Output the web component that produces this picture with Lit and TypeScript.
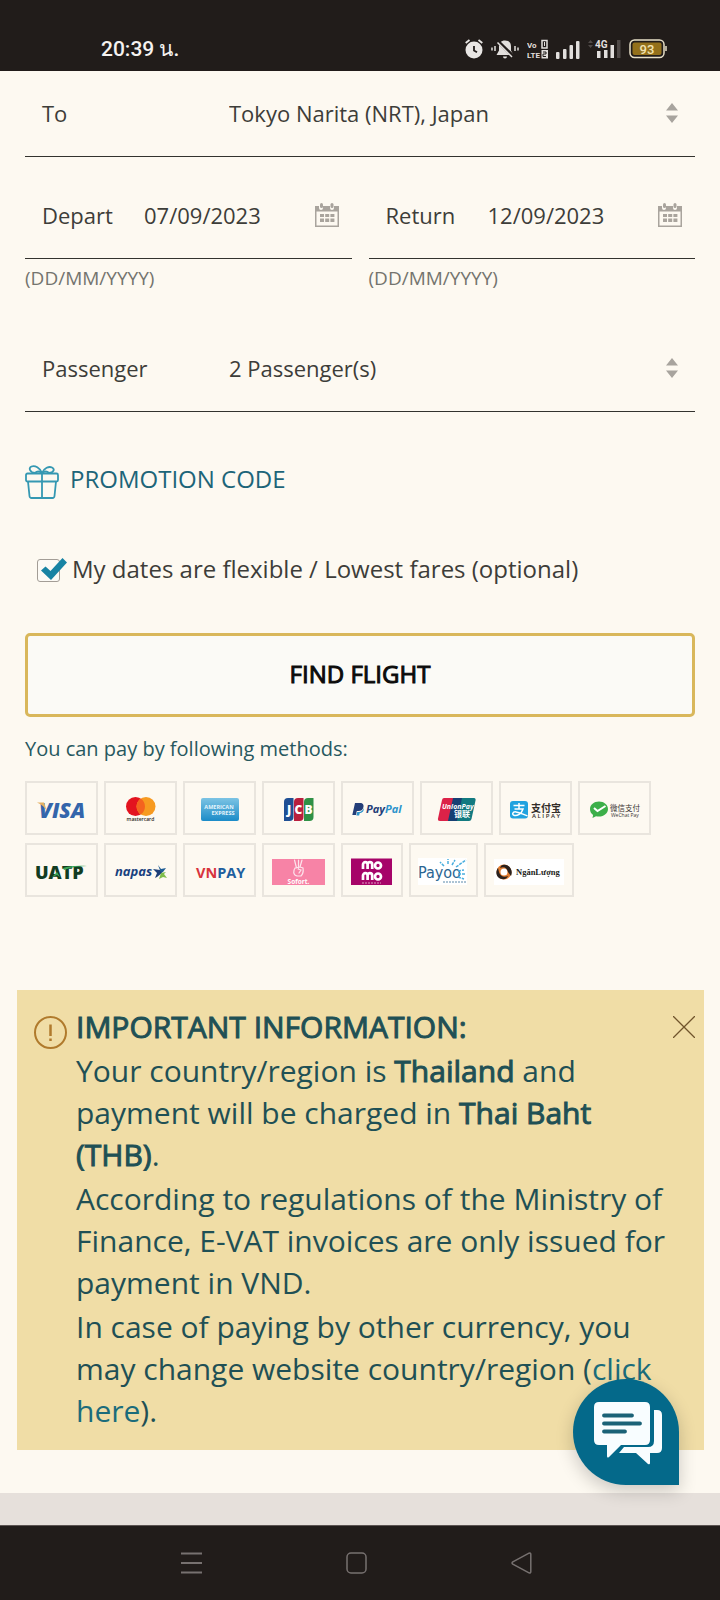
import { LitElement, html, svg, css } from "lit";
import { customElement, state } from "lit/decorators.js";

const calendarIcon = html`<svg class="calendar" viewBox="0 0 24 24" aria-hidden="true">
  <path d="M0 3h4v2a2 2 0 0 0 4 0V3h7v2a2 2 0 0 0 4 0V3h5v21H0zM1.500 8.500v14h21v-14z" fill="#a9a49d" fill-rule="evenodd"/>
  <rect x="5" y="0" width="3" height="5" rx="1.500" fill="#a9a49d"/><rect x="15.500" y="0" width="3" height="5" rx="1.500" fill="#a9a49d"/>
  <path d="M5 11h4v3H5zM10.200 11h4v3h-4zM15.400 11h4v3h-4zM5 15.500h4v3.500H5zM10.200 15.500h4v3.500h-4zM15.400 15.500h4v3.500h-4z" fill="#a9a49d"/>
</svg>`;

const sortIcon = html`<svg class="sort" viewBox="0 0 12 20" aria-hidden="true">
  <path d="M0 7.500 6 0l6 7.500zM0 12.500h12L6 20z" fill="#a8a49e"/>
</svg>`;

interface Payment {
  name: string;
  size: "regular" | "small" | "medium" | "large";
  width: number;
  art: unknown;
}

const firstRow: Payment[] = [
  { name: "Visa", size: "regular", width: 73, art: svg`
    <text x="14" y="37" class="open heavy italic" font-size="21" fill="#3465ab">VISA</text>
    <path d="M12 21.500h7l3 9c-2-4-5-7-10-9z" fill="#e6b163"/>` },
  { name: "Mastercard", size: "regular", width: 73, art: svg`
    <circle cx="31.500" cy="25.500" r="9.500" fill="#e3131f"/><circle cx="42" cy="25.500" r="9.500" fill="#f79a20"/>
    <path d="M36.750 17.600a9.500 9.500 0 0 1 0 15.800a9.500 9.500 0 0 1 0-15.800z" fill="#f4631f"/>
    <text x="36.500" y="40" text-anchor="middle" class="open semi" font-size="5" fill="#2c2622">mastercard</text>` },
  { name: "American Express", size: "regular", width: 73, art: svg`
    <defs><linearGradient id="amex" x2="0" y2="1"><stop stop-color="#7cc4e4"/><stop offset="1" stop-color="#1b8bc8"/></linearGradient></defs>
    <rect x="18" y="17" width="38" height="23" rx="2" fill="url(#amex)"/>
    <text x="36" y="28" text-anchor="middle" class="open bold" font-size="5.500" fill="#e4f4fb">AMERICAN</text>
    <text x="40" y="34" text-anchor="middle" class="open bold" font-size="5.500" fill="#e4f4fb">EXPRESS</text>` },
  { name: "JCB", size: "regular", width: 73, art: svg`
    <path d="M26 17h5.500v19a4 4 0 0 1-4 4H22V21a4 4 0 0 1 4-4z" fill="#1f4f94"/>
    <path d="M36 17h5.500v19a4 4 0 0 1-4 4H32V21a4 4 0 0 1 4-4z" fill="#b91f3e"/>
    <path d="M46 17h5.500v19a4 4 0 0 1-4 4H42V21a4 4 0 0 1 4-4z" fill="#2f9146"/>
    <text x="25" y="33" class="open heavy" font-size="12" fill="#fff">J</text>
    <text x="32.500" y="33" class="open heavy" font-size="12" fill="#fff">C</text>
    <text x="42.500" y="33" class="open heavy" font-size="12" fill="#fff">B</text>` },
  { name: "PayPal", size: "regular", width: 73, art: svg`
    <path d="M14 22h5c3 0 4 2 3.400 4.200C21.800 29 20 30 17.400 30h-1.600L15 34h-3.700z" fill="#243e78"/>
    <path d="M16.200 31h1.800c2.500-.2 4-1.500 4.400-4c1 2.500-.6 5-3.600 5l-.7 2.500h-2.700z" fill="#2d94cc"/>
    <text x="25" y="32" class="open bold italic" font-size="11"><tspan fill="#243e78">Pay</tspan><tspan fill="#2d94cc">Pal</tspan></text>` },
  { name: "UnionPay", size: "regular", width: 73, art: svg`
    <path d="M24 17h11l-5 23H20q-2.500 0-2-2.500l4-18.500q.5-2 2-2z" fill="#dc2248"/>
    <path d="M33 17h11l-5 23H28z" fill="#173f73"/><path d="M42 17h12q2 0 1.500 2.500l-4 18.500q-.5 2-2.500 2H37z" fill="#127a80"/>
    <text x="22" y="28" class="open bold italic" font-size="7" fill="#fff">UnionPay</text>
    <text x="34" y="36" class="cjk bold" font-size="8" fill="#fff">银联</text>` },
  { name: "Alipay", size: "regular", width: 73, art: svg`
    <rect x="11" y="20" width="18" height="17.500" rx="3" fill="#21a2df"/>
    <path d="M14.500 24.500h11M20 22v6M15.500 28h8.500c-1.500 5-6 7-8.500 6.500c-3-.7-2-4 1.500-3.600c4 .5 7 2.500 11.500 4" fill="none" stroke="#fff" stroke-width="1.500"/>
    <text x="32" y="30.500" class="cjk semi" font-size="10" fill="#332d29">支付宝</text>
    <text x="47" y="36.500" text-anchor="middle" class="open semi" font-size="6" fill="#332d29">A L I P A Y</text>` },
  { name: "WeChat Pay", size: "regular", width: 73, art: svg`
    <path d="M21 20.500c5 0 9 3.300 9 7.500s-4 7.600-9 7.600c-1.200 0-2-.1-3-.4L14.500 37l.6-3c-2-1.400-3.100-3.500-3.100-6c0-4.200 4-7.500 9-7.500z" fill="#3caf49"/>
    <path d="m16 27 3.500 3L27.500 25" fill="none" stroke="#fff" stroke-width="2"/>
    <text x="32" y="29.500" class="cjk" font-size="7.500" fill="#3a3531">微信支付</text>
    <text x="33" y="36" class="open" font-size="5" fill="#3a3531">WeChat Pay</text>` },
];

const secondRow: Payment[] = [
  { name: "UATP", size: "regular", width: 73, art: svg`
    <text x="10" y="36" class="open heavy" font-size="18" fill="#123c22">UATP</text>
    <path d="M38 25c6-2 14-2.500 24-2c-10 .5-17 1.500-23 4z" fill="#3aa658"/><path d="M27 34l5-5 3 5-3-2z" fill="#3aa658"/>` },
  { name: "Napas", size: "regular", width: 73, art: svg`
    <text x="11" y="33" class="open bold italic" font-size="13" fill="#18407e">napas</text>
    <path d="M54 22l3 4 5-1-3 4-2 1z" fill="#1d5c94"/><path d="M49 26l7 1 2 3-5 4-2 1 2-5z" fill="#1b3f78"/>
    <path d="M57 30l5-1-2 2 3 4-4-1-4 2z" fill="#7ebd4a"/>` },
  { name: "VNPAY", size: "regular", width: 73, art: svg`
    <text x="13" y="35" class="open bold" font-size="14.500"><tspan fill="#d8343d">VN</tspan><tspan fill="#1f609f">PAY</tspan></text>` },
  { name: "Sofort", size: "regular", width: 73, art: svg`
    <rect x="10" y="16" width="53" height="26" fill="#f783a6"/>
    <path d="M34.500 25l-2-8M36.500 25v-8M38 24l2-7M33 25c-2 3-2 7 2 8h4c2-2 2.500-5 2-8l-3-1zM36 26l3 1-2 3" fill="none" stroke="#fde4ec" stroke-width="1.200" stroke-linecap="round"/>
    <text x="36.500" y="41" text-anchor="middle" class="open bold" font-size="6.500" fill="#fff">Sofort.</text>` },
  { name: "MoMo", size: "small", width: 62, art: svg`
    <rect x="10" y="15.500" width="41" height="26.500" fill="#a60469"/>
    <g fill="none" stroke="#fff" stroke-width="2.700">
      <path d="M22 26v-4.500a2.300 2.300 0 0 1 4.600 0V26v-4.500a2.300 2.300 0 0 1 4.600 0V26"/><circle cx="37" cy="22.500" r="3"/>
      <path d="M22 37v-4.500a2.300 2.300 0 0 1 4.600 0V37v-4.500a2.300 2.300 0 0 1 4.600 0V37"/><circle cx="37" cy="33.500" r="3"/>
    </g><path d="M21 40h19" stroke="#dc9bc2" stroke-dasharray="2 1"/>` },
  { name: "Payoo", size: "medium", width: 69, art: svg`
    <rect x="9" y="15" width="49" height="27" fill="#fff"/>
    <text x="9" y="35" class="condensed" font-size="16" fill="#2a6592">Payoo</text>
    <g fill="none" stroke="#49aede" stroke-width="1.500" stroke-dasharray="3 1"><path d="M35 23l-4-4M39 21v-5M43 22l3-5M47 24l10-7M49 28l6-1M49 31l8 0M49 34l6 2"/></g>
    <path d="M34 39h24" stroke="#5988aa" stroke-dasharray="2 1"/>` },
  { name: "NgânLượng", size: "large", width: 90, art: svg`
    <rect x="10" y="16" width="70" height="26" fill="#fff"/>
    <circle cx="20" cy="29" r="5.500" fill="none" stroke="#e17b2e" stroke-width="4"/>
    <path d="M14 25c-3 4-2 10 4 11c3 1 5-1 6-3c-4 2-8 0-9-4zM27 33c2-4 0-10-5-11c-3-1-5 0-6 3c4-2 7 0 8 4z" fill="#29211e"/>
    <text x="32" y="32" class="serif bold" font-size="8.500" fill="#231e1b">NgânLượng</text>` },
];

@customElement("payment-logo")
class PaymentLogo extends LitElement {
  static properties = { item: { attribute: false } };
  declare item: Payment;

  static styles = css`
    :host { display: block; }
    .card { box-sizing: border-box; height: 54px; border: 2px solid #e9e5de; }
    .regular { width: 73px; }
    .small { width: 62px; }
    .medium { width: 69px; }
    .large { width: 90px; }
    svg { display: block; width: 100%; height: 50px; }
    .open { font-family: "Open Sans", sans-serif; }
    .condensed { font-family: "Liberation Sans Narrow", "DejaVu Sans Condensed", "Open Sans", sans-serif; }
    .cjk { font-family: "Noto Sans CJK SC", sans-serif; }
    .serif { font-family: "Liberation Serif", serif; }
    .semi { font-weight: 600; }
    .bold { font-weight: 700; }
    .heavy { font-weight: 800; }
    .italic { font-style: italic; }
  `;

  render() {
    const { name, size, width, art } = this.item;
    return html`<div class="card ${size}">
      <svg viewBox="2 2 ${width - 4} 50" role="img" aria-label=${name}>${art}</svg>
    </div>`;
  }
}

@customElement("app-root")
class AppRoot extends LitElement {
  @state() private noticeOpen = true;

  static styles = css`
    :host {
      display: flex;
      flex-direction: column;
      min-height: 100vh;
      background: #fdf9f1;
      color: #3d3d39;
      font-family: "Open Sans", "Noto Sans", sans-serif;
      font-size: 22px;
    }
    button, input, select { font: inherit; color: inherit; margin: 0; padding: 0; border: 0; background: none; border-radius: 0; }
    svg { display: block; flex: none; }

    .status {
      display: flex; align-items: center; justify-content: space-between;
      box-sizing: border-box; height: 71px; padding: 27px 53px 0 101px;
      background: #211c1a; color: #f5f2f0;
    }
    .time { font: 500 21px/26px Roboto, "Noto Sans", sans-serif; }
    .indicators { display: flex; align-items: center; gap: 8px; }
    .tiny { font: 700 8px Roboto, sans-serif; }
    .net { font: 700 10px Roboto, sans-serif; }
    .charge { font: 500 13px Roboto, sans-serif; }

    main { flex: 1; padding: 0 25px; }
    .field {
      display: grid; grid-template-columns: 187px 1fr auto; align-items: center;
      box-sizing: border-box; height: 86px; padding: 0 17px 2px;
      border-bottom: 1px solid #33332f;
    }
    .field select, .field input { width: 100%; min-width: 0; appearance: none; outline: none; }
    .sort { width: 12px; height: 20px; }
    .dates { display: grid; grid-template-columns: 1fr 1fr; gap: 17px; margin: 16px 0 35px; }
    .date { grid-template-columns: 102px 1fr auto; padding-right: 13px; }
    .calendar { width: 24px; height: 24px; }
    .hint { margin: 6px 0 0; font-size: 19px; line-height: 26px; color: #74746e; }

    .promo { display: flex; align-items: flex-start; gap: 11px; margin-top: 53px; font-size: 24px; line-height: 28px; color: #1d6579; cursor: pointer; }
    .gift { width: 34px; height: 34px; }
    .flex { display: flex; align-items: center; gap: 12px; margin: 54px 0 46px 12px; height: 34px; font-size: 24px; line-height: 30px; }
    .flex label { padding-bottom: 3px; }
    .tick { position: relative; width: 23px; height: 23px; flex: none; }
    .tick input { display: block; box-sizing: border-box; width: 23px; height: 23px; appearance: none; border: 1px solid #a39d96; border-radius: 3px; background: #fcfaf5; }
    .tick svg { position: absolute; left: 4px; top: -1px; width: 26px; height: 22px; pointer-events: none; visibility: hidden; }
    .tick input:checked + svg { visibility: visible; }
    .find {
      display: block; box-sizing: border-box; width: 100%; height: 84px; padding-bottom: 4px;
      border: 3px solid #d9b75b; border-radius: 5px; background: #fbfaf6;
      color: #0b0b0b; font-size: 24px; cursor: pointer;
      -webkit-text-stroke: 1px currentColor;
    }
    .methods { margin: 17px 0; font-size: 20px; line-height: 30px; color: #27585f; }
    .cards { display: flex; flex-wrap: wrap; gap: 6px; margin: 0; padding: 0; list-style: none; }
    .cards + .cards { margin-top: 8px; }

    .notice {
      display: flex; align-items: flex-start; gap: 9px;
      margin: 93px -9px 43px -8px; padding: 16px 9px 18px 17px;
      background: #f0dda6; color: #1f5055;
    }
    .warn { width: 33px; height: 33px; margin-top: 10px; }
    .message { flex: 1; display: flex; flex-direction: column; gap: 2px; margin-right: -18px; font-size: 30px; line-height: 42px; }
    .message h2, .message p { margin: 0; font-size: inherit; font-weight: 400; }
    .message h2, .message strong { font-weight: 400; -webkit-text-stroke: 1px currentColor; }
    .message a { color: #1b6c7b; text-decoration: none; }
    .close { margin-top: 10px; cursor: pointer; }

    .strip { height: 32px; background: #e6e0db; }
    .nav { display: flex; justify-content: center; gap: 144px; padding: 26px 8px 26px 0; border-top: 1px solid #5c5452; background: #211c1a; }
    .chat {
      position: absolute; right: 41px; top: 1379px; width: 106px; height: 106px;
      box-sizing: border-box; display: grid; place-items: center; padding: 3px 0 0 4px;
      border-radius: 53px 53px 0 53px; background: #04698a;
      box-shadow: 0 6px 18px rgba(0, 0, 0, 0.2); cursor: pointer;
    }
  `;

  private statusBar() {
    return html`<header class="status">
      <span class="time">20:39 น.</span>
      <span class="indicators">
        <svg width="18" height="20" viewBox="0 0 18 20"><circle cx="9" cy="11" r="8.500" fill="#e9e6e4"/><path d="M9 7v4.500l3 1.800" stroke="#211c1a" stroke-width="1.800" fill="none"/><path d="M.7 4 4.500 1M17.300 4 13.500 1" stroke="#e9e6e4" stroke-width="1.800"/></svg>
        <svg width="28" height="20" viewBox="0 0 28 20"><path d="M14 1.500c4 0 6 2.500 6 6v4l2.500 4.500H5.500L8 11.500v-4c0-3.500 2-6 6-6zM12 17.500h4a2 2 0 0 1-4 0z" fill="#e2dfdd"/><path d="M7 2.500 22 17" stroke="#211c1a" stroke-width="3.500"/><path d="M6.500 3.500 21 18M1 8.500v3M4 7v5M24 7v5M27 8.500v3" stroke="#e2dfdd" stroke-width="1.500"/></svg>
        <svg width="21" height="20" viewBox="0 0 21 20" fill="#e2dfdd"><text x="0" y="8.500" class="tiny">Vo</text><text x="0" y="19" class="tiny">LTE</text><rect x="15" y="1.500" width="5" height="7.500" fill="none" stroke="#e2dfdd" stroke-width="1.500"/><path d="M17.500 3v4" stroke="#e2dfdd"/><rect x="14.500" y="11" width="6.500" height="8.500"/><path d="M16 13h3v2h-3v2.500h3" fill="none" stroke="#211c1a"/></svg>
        <svg width="24" height="19" viewBox="0 0 24 19" fill="#e2dfdd"><rect y="12" width="3.500" height="7" rx="1"/><rect x="7" y="9" width="3.500" height="10" rx="1"/><rect x="13.500" y="5" width="3.500" height="14" rx="1"/><rect x="20" y="1" width="3.500" height="18" rx="1"/></svg>
        <svg width="33" height="20" viewBox="0 0 33 20" fill="#e2dfdd"><path d="M0 4 2.500 1 5 4zM0 6l2.500 3L5 6z" fill="#4f4947"/><text x="7" y="9" class="net">4G</text><rect x="9" y="12" width="3.500" height="7"/><rect x="16" y="11" width="3.500" height="8"/><rect x="22.500" y="6" width="3.500" height="13"/><rect x="29" y="1" width="3.500" height="18" fill="#4f4947"/></svg>
        <svg width="38" height="20" viewBox="0 0 38 20"><rect x="1" y="1" width="34" height="17.500" rx="4.500" fill="none" stroke="#e7dfc8" stroke-width="1.500"/><rect x="3.500" y="3.500" width="29" height="12.500" rx="2" fill="#93701b"/><path d="M37 7v5" stroke="#e7dfc8" stroke-width="1.500"/><text x="18" y="14.500" text-anchor="middle" class="charge" fill="#f2e2b0">93</text></svg>
      </span>
    </header>`;
  }

  private dateField(id: string, label: string, value: string) {
    return html`<div>
      <div class="field date">
        <label for=${id}>${label}</label>
        <input id=${id} type="text" .value=${value} />
        ${calendarIcon}
      </div>
      <p class="hint">(DD/MM/YYYY)</p>
    </div>`;
  }

  private notice() {
    return html`<section class="notice">
      <svg class="warn" viewBox="0 0 33 33" fill="none" stroke="#b07a2c" stroke-width="2"><circle cx="16.500" cy="16.500" r="15.500"/><path d="M16.500 8.500v11.500M16.500 22.500v2.500" stroke-width="2.500"/></svg>
      <div class="message">
        <h2>IMPORTANT INFORMATION:</h2>
        <p>Your country/region is <strong>Thailand</strong> and payment will be charged in <strong>Thai Baht (THB)</strong>.</p>
        <p>According to regulations of the Ministry of Finance, E-VAT invoices are only issued for payment in VND.</p>
        <p>In case of paying by other currency, you may change website country/region (<a href="#region">click here</a>).</p>
      </div>
      <button class="close" aria-label="Close" @click=${() => (this.noticeOpen = false)}>
        <svg width="22" height="22" viewBox="0 0 22 22"><path d="m0 0 22 22M22 0 0 22" stroke="#70542c" stroke-width="1.300"/></svg>
      </button>
    </section>`;
  }

  render() {
    return html`
      ${this.statusBar()}
      <main>
        <div class="field">
          <label for="to">To</label>
          <select id="to"><option>Tokyo Narita (NRT), Japan</option></select>
          ${sortIcon}
        </div>
        <div class="dates">
          ${this.dateField("depart", "Depart", "07/09/2023")}
          ${this.dateField("return", "Return", "12/09/2023")}
        </div>
        <div class="field">
          <label for="passenger">Passenger</label>
          <select id="passenger"><option>2 Passenger(s)</option></select>
          ${sortIcon}
        </div>
        <button class="promo">
          <svg class="gift" viewBox="0 0 34 34" fill="none" stroke="#3598b2" stroke-width="1.800" stroke-linejoin="round">
            <rect x="1" y="8.500" width="32" height="8" rx="1.500"/><path d="M3 16.500 4.500 31q.2 2 2 2h21q1.800 0 2-2L31 16.500M17 8.500V33"/>
            <path d="M17 8C15 3 10 0 6.500 1.500S5 7.500 10 8M17 8c2-5 7-7 10-5.500S29 7.500 24 8"/><path d="M17 8c-2-1.500-5-2-7 0M17 8c2-1.500 5-2 7 0"/>
          </svg>
          <span>PROMOTION CODE</span>
        </button>
        <div class="flex">
          <span class="tick">
            <input id="flexible" type="checkbox" checked />
            <svg viewBox="0 0 26 22"><path d="m0 12.500 4.500-4L9.500 13 21.500 0l4.500 4.500L10 22z" fill="#1883a3"/></svg>
          </span>
          <label for="flexible">My dates are flexible / Lowest fares (optional)</label>
        </div>
        <button class="find">FIND FLIGHT</button>
        <p class="methods">You can pay by following methods:</p>
        <ul class="cards">${firstRow.map((item) => html`<li><payment-logo .item=${item}></payment-logo></li>`)}</ul>
        <ul class="cards">${secondRow.map((item) => html`<li><payment-logo .item=${item}></payment-logo></li>`)}</ul>
        ${this.noticeOpen ? this.notice() : ""}
      </main>
      <div class="strip"></div>
      <nav class="nav">
        <button aria-label="Recent apps"><svg width="21" height="22" viewBox="0 0 21 22"><path d="M0 1.500h21M0 11h21M0 20.500h21" stroke="#777170" stroke-width="1.800"/></svg></button>
        <button aria-label="Home"><svg width="21" height="22" viewBox="0 0 21 22"><rect x="1" y="1" width="19" height="20" rx="4" fill="none" stroke="#777170" stroke-width="1.500"/></svg></button>
        <button aria-label="Back"><svg width="21" height="22" viewBox="0 0 21 22"><path d="M1.800 9.800 18 1.200q1.800-.7 1.800 1v17.600q0 1.700-1.800 1L1.800 12.200q-1.500-1.200 0-2.400z" fill="none" stroke="#777170" stroke-width="1.500"/></svg></button>
      </nav>
      <button class="chat" aria-label="Chat">
        <svg width="68" height="66" viewBox="0 0 68 66">
          <path d="M60 9h3q5 0 5 5v33q0 5-5 5h-7v10q0 2-2 1L42 52H25l5-6h24q6 0 6-6z" fill="#f8fdff"/>
          <path d="M5 1h46q5 0 5 5v33q0 5-5 5H27L15 56q-2 1.500-2-1V44H5q-5 0-5-5V6q0-5 5-5z" fill="#f8fdff"/>
          <path d="M10 14.500h28M10 22.500h36M10 30.500h21" stroke="#1b6277" stroke-width="3.800" stroke-linecap="round"/>
        </svg>
      </button>
    `;
  }
}
